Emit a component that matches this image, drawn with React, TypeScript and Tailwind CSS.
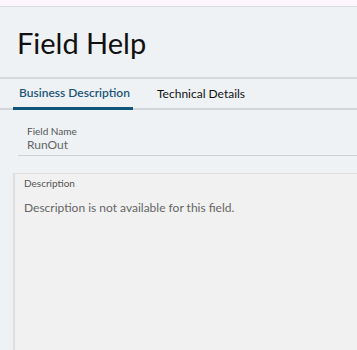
import React from "react";

const App = () => {
  return (
    <div
      className="w-[357px] h-[350px] overflow-hidden bg-[#eef2f5] flex flex-col"
      style={{ fontFamily: 'Lato, "Noto Sans", sans-serif' }}
    >
      <div className="h-[7px] bg-[#fdf6fc] border-b border-[#dddddd] shrink-0" />
      <div className="h-[72px] flex items-center pl-[17px] border-b-2 border-[#d6d9dc] shrink-0">
        <h1 className="text-[29px] leading-none text-[#111] font-normal mt-[1px]">Field Help</h1>
      </div>
      <div className="flex pl-[13px] border-b-2 border-[#d3d6d9] h-[31px] shrink-0">
        <div className="px-[6px] flex items-center whitespace-nowrap text-[12px] font-semibold text-[#1d5577] border-b-[3px] border-[#0f5479] mb-[-2px] w-[120px]">
          Business Description
        </div>
        <div className="pl-[24px] flex items-center whitespace-nowrap text-[12px] text-[#111]">
          Technical Details
        </div>
      </div>
      <div className="ml-[18px] pl-[9px] pt-[15px] pb-[2px] border-b border-[#cfd2d5]">
        <div className="text-[10px] text-[#555] leading-[12px]">Field Name</div>
        <div className="text-[12px] text-[#666] leading-[16px]">RunOut</div>
      </div>
      <div className="ml-[13px] mt-[17px] flex-1 bg-[#f1f1f1] border-l-2 border-t border-[#dedede] pl-[9px] pt-[2px]">
        <div className="text-[10px] text-[#555] leading-[14px]">Description</div>
        <div className="text-[12px] text-[#666] mt-[10px] leading-[16px]">
          Description is not available for this field.
        </div>
      </div>
    </div>
  );
};

export default App;
